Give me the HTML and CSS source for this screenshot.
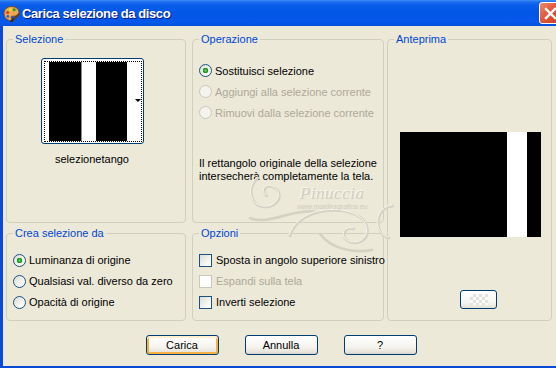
FILE: index.html
```html
<!DOCTYPE html>
<html lang="it">
<head>
    <meta charset="UTF-8">
    <meta name="viewport" content="width=device-width, initial-scale=1.0">
    <title>Carica selezione da disco</title>
    <link rel="stylesheet" href="styles.css">
</head>
<body>
    <div class="window">
        <div class="titlebar">
            <svg class="app-icon" viewBox="0 0 17 17" width="17" height="17">
                <path d="M8.5 1.5C4 1.5 1 4.5 1 8.5c0 4 3 7 6.5 7 1.6 0 1.8-1.3 1-2.2-.8-.9-.3-2.1 1-2.1h2.2c2.3 0 4.3-1.6 4.3-4C16 4 12.8 1.5 8.5 1.5z" fill="#e9a851" stroke="#7a4a1c" stroke-width="1"/>
                <circle cx="4.6" cy="7.6" r="1.5" fill="#e23a22"/>
                <circle cx="7.4" cy="4.6" r="1.5" fill="#f6dc2a"/>
                <circle cx="11.2" cy="4.8" r="1.5" fill="#2f9a34"/>
                <circle cx="4.8" cy="11.4" r="1.4" fill="#2f5fd6"/>
                <path d="M15.5 9.5L9 16" stroke="#6b3d16" stroke-width="2" stroke-linecap="round"/>
                <path d="M9.8 14.6l-1.6 1.9" stroke="#2b2b2b" stroke-width="2.2" stroke-linecap="round"/>
            </svg>
            <span class="title">Carica selezione da disco</span>
            <div class="close">
                <svg viewBox="0 0 21 21" width="21" height="21">
                    <path d="M6 6L15 15M15 6L6 15" stroke="#fff" stroke-width="2.4" stroke-linecap="square"/>
                </svg>
            </div>
        </div>

        <div class="client">
            <div class="panels">
                <div class="col col-left">
                    <fieldset class="group top-group">
                        <legend>Selezione</legend>
                        <div class="sel-body">
                            <div class="thumb">
                                <div class="thumb-focus">
                                    <div class="thumb-image"></div>
                                </div>
                                <span class="thumb-arrow"></span>
                            </div>
                            <div class="thumb-name">selezionetango</div>
                        </div>
                    </fieldset>
                    <fieldset class="group low-group">
                        <legend>Crea selezione da</legend>
                        <div class="opts low-opts">
                            <label class="opt"><input type="radio" name="source" checked>Luminanza di origine</label>
                            <label class="opt"><input type="radio" name="source">Qualsiasi val. diverso da zero</label>
                            <label class="opt"><input type="radio" name="source">Opacità di origine</label>
                        </div>
                    </fieldset>
                </div>

                <div class="col col-mid">
                    <fieldset class="group top-group">
                        <legend>Operazione</legend>
                        <div class="opts op-opts">
                            <label class="opt"><input type="radio" name="op" checked>Sostituisci selezione</label>
                            <label class="opt disabled"><input type="radio" name="op" disabled>Aggiungi alla selezione corrente</label>
                            <label class="opt disabled"><input type="radio" name="op" disabled>Rimuovi dalla selezione corrente</label>
                        </div>
                        <p class="note">Il rettangolo originale della selezione intersecherà completamente la tela.</p>
                    </fieldset>
                    <fieldset class="group low-group">
                        <legend>Opzioni</legend>
                        <div class="opts low-opts">
                            <label class="opt check"><input type="checkbox">Sposta in angolo superiore sinistro</label>
                            <label class="opt check disabled"><input type="checkbox" disabled>Espandi sulla tela</label>
                            <label class="opt check"><input type="checkbox">Inverti selezione</label>
                        </div>
                    </fieldset>
                </div>

                <fieldset class="group preview-group">
                    <legend>Anteprima</legend>
                    <div class="preview"></div>
                    <button class="swatch-btn" type="button"><span class="swatch"></span></button>
                </fieldset>
            </div>

            <div class="buttons">
                <button class="btn btn-default" type="button">Carica</button>
                <button class="btn" type="button">Annulla</button>
                <button class="btn" type="button">?</button>
            </div>

            <!-- watermark over the dialog -->
            <div class="watermark">
                <svg class="swirls" viewBox="240 140 170 120" width="170" height="120">
                    <g fill="none" stroke="#d6d2c3" stroke-width="2.6" stroke-linecap="round">
                        <path d="M258 178C247 188 250 206 265 207C279 208 285 192 273 187C265 184 261 193 267 196"/>
                        <path d="M250 218C268 226 292 208 318 212"/>
                        <path d="M290 236C298 210 338 204 360 217C375 229 366 247 350 242C340 238 344 226 354 229"/>
                        <path d="M393 206C376 207 372 233 389 238"/>
                        <path d="M320 234C330 247 350 254 372 250"/>
                    </g>
                    <g fill="none" stroke="#f7f6f0" stroke-width="1" stroke-linecap="round" transform="translate(-1 -1)">
                        <path d="M258 178C247 188 250 206 265 207C279 208 285 192 273 187C265 184 261 193 267 196"/>
                        <path d="M290 236C298 210 338 204 360 217C375 229 366 247 350 242C340 238 344 226 354 229"/>
                        <path d="M393 206C376 207 372 233 389 238"/>
                    </g>
                </svg>
                <span class="wm-name">Pinuccia</span>
                <span class="wm-url">www.maidiragrafica.eu</span>
            </div>
        </div>
    </div>
</body>
</html>
```

FILE: styles.css
```css
body {
    margin: 0;
    font-family: "Liberation Sans", Arial, sans-serif;
    font-size: 11px;
    color: #000;
    background: #ece9d8;
}
.window {
    width: 556px;
    height: 368px;
    display: flex;
    flex-direction: column;
    overflow: hidden;
}
.titlebar {
    flex: none;
    height: 26px;
    display: flex;
    align-items: center;
    padding-left: 3px;
    background: linear-gradient(to bottom, #3d8ef7 0, #1d6cf0 2px, #0a5eea 5px, #0156e6 50%, #0459ea 85%, #0650dc 100%);
    color: #fff;
}
.app-icon {
    flex: none;
    margin-right: 2px;
}
.title {
    font-weight: bold;
    font-size: 13px;
    letter-spacing: -0.4px;
    text-shadow: 1px 1px 0 #0a1a88;
}
.close {
    flex: none;
    margin-left: auto;
    margin-right: -6px;
    width: 21px;
    height: 20px;
    border: 1px solid #fff;
    border-radius: 3px;
    background: linear-gradient(135deg, #ee8a6c 0, #e2583a 45%, #c8381c 100%);
    display: flex;
    align-items: center;
    justify-content: center;
}
.client {
    flex: 1;
    position: relative;
    background: #ece9d8;
    border-left: 3px solid #0b4ad9;
    border-bottom: 2px solid #0b4ad9;
    padding: 7px 0 0 3px;
}
.panels {
    display: flex;
    height: 288px;
}
.col {
    display: flex;
    flex-direction: column;
    gap: 4px;
}
.col-left {
    width: 180px;
    margin-right: 6px;
}
.col-mid {
    width: 192px;
    margin-right: 3px;
}
.group {
    box-sizing: border-box;
    margin: 0;
    padding: 0 6px;
    min-width: 0;
    border: 1px solid #d0d0bf;
    border-radius: 4px;
}
.group legend {
    padding: 0 2px;
    color: #0046d5;
    font-size: 11px;
    line-height: 13px;
}
.top-group {
    height: 190px;
}
.low-group {
    height: 94px;
}
.preview-group {
    width: 165px;
    height: 288px;
}

/* selezione */
.sel-body {
    display: flex;
    flex-direction: column;
    align-items: center;
    padding: 12px 8px 0 0;
}
.thumb {
    position: relative;
    box-sizing: border-box;
    width: 103px;
    height: 86px;
    padding: 2px 1px 1px 2px;
    border: 1px solid #003c74;
    border-radius: 3px;
    background: #fff;
}
.thumb-focus {
    height: 100%;
    box-sizing: border-box;
    border: 1px dotted #000;
}
.thumb-image {
    height: 100%;
    background: linear-gradient(to right, #fff 0 4px, #000 4px 36px, #8a8a8a 36px 37px, #fff 37px 51px, #000 51px 82px, #fff 82px);
}
.thumb-arrow {
    position: absolute;
    left: 93px;
    top: 40px;
    border-left: 3px solid transparent;
    border-right: 3px solid transparent;
    border-top: 3px solid #000;
}
.thumb-name {
    margin-top: 9px;
    line-height: 13px;
}

/* options */
.opts {
    display: flex;
    flex-direction: column;
}
.op-opts {
    padding-top: 14px;
}
.op-opts .opt {
    height: 21px;
}
.low-opts {
    padding-top: 10px;
    gap: 1px;
}
.low-opts .opt {
    height: 20px;
}
.opt {
    display: flex;
    align-items: center;
    gap: 3px;
    white-space: nowrap;
}
.opt.check {
    gap: 4px;
}
.opt.disabled {
    color: #aca899;
}
.opt input {
    appearance: none;
    flex: none;
    width: 13px;
    height: 13px;
    margin: 0;
    box-sizing: border-box;
    border: 1px solid #1c5180;
    background: linear-gradient(135deg, #dcdcd7 0, #f4f4f0 60%, #fff 100%);
}
.opt input[type="radio"] {
    border-radius: 50%;
}
.opt input[type="radio"]:checked {
    background: radial-gradient(circle, #7ee07e 0, #21a121 1.6px, #1c961c 2.6px, transparent 3px), linear-gradient(135deg, #dcdcd7 0, #f4f4f0 60%, #fff 100%);
}
.opt input:disabled {
    border-color: #cac8bb;
    background: #f4f3ee;
}
.opt input[type="checkbox"]:disabled {
    background: #fff;
}
.note {
    margin: 34px 0 0;
    line-height: 13px;
}

/* anteprima */
.preview {
    width: 141px;
    height: 105px;
    margin: 86px 0 0 6px;
    background: linear-gradient(to right, #000 0 107px, #fff 107px 127px, #000 127px);
}
.swatch-btn {
    display: flex;
    align-items: center;
    justify-content: center;
    width: 37px;
    height: 19px;
    margin: 53px 0 0 66px;
    padding: 0;
    border: 1px solid #003c74;
    border-radius: 3px;
    background: linear-gradient(to bottom, #fff 0, #f4f4f0 70%, #e3e0d6 100%);
}
.swatch {
    width: 18px;
    height: 11px;
    background-color: #fafaf8;
    background-image: conic-gradient(#e2e2e0 25%, transparent 0 50%, #e2e2e0 0 75%, transparent 0);
    background-size: 6px 6px;
}

/* buttons */
.buttons {
    display: flex;
    justify-content: center;
    gap: 26px;
    margin-top: 14px;
}
.btn {
    width: 73px;
    height: 20px;
    padding: 0;
    font-family: "Liberation Sans", Arial, sans-serif;
    font-size: 11px;
    color: #000;
    border: 1px solid #003c74;
    border-radius: 3px;
    background: linear-gradient(to bottom, #fff 0, #f5f4ef 60%, #e6e3da 90%, #d6d0c5 100%);
}
.btn-default {
    box-shadow: inset 0 2px 0 #fff0cf, inset 0 0 0 2px #f6b241;
}

/* watermark */
.watermark {
    position: absolute;
    left: 237px;
    top: 114px;
    width: 170px;
    height: 120px;
    pointer-events: none;
}
.swirls {
    display: block;
}
.wm-name {
    position: absolute;
    left: 60px;
    top: 47px;
    font-family: "Liberation Serif", serif;
    font-style: italic;
    font-size: 17px;
    line-height: 14px;
    color: #d2cebe;
    text-shadow: -1px -1px 0 #f8f7f2;
    letter-spacing: 0.5px;
}
.wm-url {
    position: absolute;
    left: 57px;
    top: 63px;
    font-size: 7px;
    line-height: 8px;
    font-style: italic;
    color: #cfcbbb;
}
```
